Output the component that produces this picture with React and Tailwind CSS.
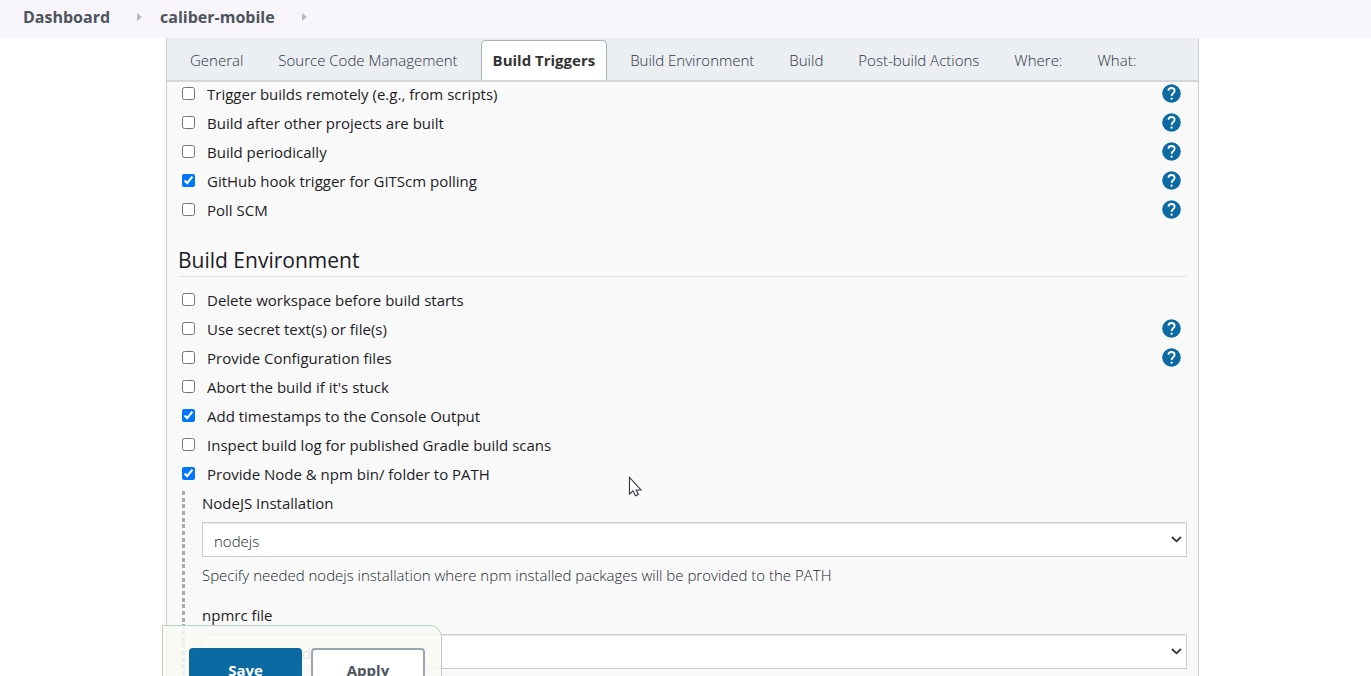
import React from "react";

const tabs = [
  { label: "General" },
  { label: "Source Code Management" },
  { label: "Build Triggers", active: true },
  { label: "Build Environment" },
  { label: "Build" },
  { label: "Post-build Actions" },
  { label: "Where:" },
  { label: "What:" },
];

const triggers = [
  { id: "remote", label: "Trigger builds remotely (e.g., from scripts)", help: true },
  { id: "after", label: "Build after other projects are built", help: true },
  { id: "periodic", label: "Build periodically", help: true },
  { id: "github", label: "GitHub hook trigger for GITScm polling", help: true, checked: true },
  { id: "poll", label: "Poll SCM", help: true },
];

const environment = [
  { id: "delete", label: "Delete workspace before build starts" },
  { id: "secret", label: "Use secret text(s) or file(s)", help: true },
  { id: "config", label: "Provide Configuration files", help: true },
  { id: "abort", label: "Abort the build if it's stuck" },
  { id: "timestamps", label: "Add timestamps to the Console Output", checked: true },
  { id: "gradle", label: "Inspect build log for published Gradle build scans" },
  { id: "node", label: "Provide Node & npm bin/ folder to PATH", checked: true },
];

function Caret() {
  return (
    <svg width="5" height="8" viewBox="0 0 5 8" aria-hidden="true">
      <path d="M0 0L5 4L0 8Z" fill="#b9b9be" />
    </svg>
  );
}

function HelpIcon() {
  return (
    <svg width="19" height="19" viewBox="2 2 20 20" aria-hidden="true">
      <circle cx="12" cy="12" r="9.8" fill="#0b6aa2" />
      <path
        d="M8.8 9.2C8.8 7.3 10.2 6.2 12 6.2S15.3 7.3 15.3 9.1C15.3 11.3 12.1 11.8 12.1 14.6"
        fill="none"
        stroke="#fff"
        strokeWidth="1.9"
      />
      <circle cx="12.1" cy="17.5" r="1.2" fill="#fff" />
    </svg>
  );
}

function OptionList({ items }) {
  return (
    <ul className="flex flex-col gap-[5px]">
      {items.map((item) => (
        <li key={item.id} className="flex h-6 items-center justify-between pr-[6px]">
          <div className="flex items-center pl-1">
            <input
              id={item.id}
              type="checkbox"
              defaultChecked={item.checked}
              className="mb-[2px] size-[13px] accent-[#0075ff]"
            />
            <label htmlFor={item.id} className="pl-3 text-[15px] leading-6 font-medium text-[#1c1c1f]">
              {item.label}
            </label>
          </div>
          {item.help && (
            <button type="button" aria-label={"Help for " + item.label} className="mb-[2px]">
              <HelpIcon />
            </button>
          )}
        </li>
      ))}
    </ul>
  );
}

function SelectField({ id, label, value }) {
  return (
    <div>
      <label htmlFor={id} className="block text-[15px] leading-6 font-medium text-[#1c1c1f]">
        {label}
      </label>
      <div className="relative mt-[7px]">
        <select
          id={id}
          className="block h-[35px] w-full appearance-none border border-[#ccc] bg-white px-[11px] pt-1 text-[15px] font-light text-[#222831] shadow-[inset_0_1px_1px_rgba(0,0,0,0.08)]"
        >
          <option>{value}</option>
        </select>
        <svg
          className="pointer-events-none absolute top-[14px] right-[5px]"
          width="11"
          height="7"
          viewBox="0 0 11 7"
          fill="none"
          aria-hidden="true"
        >
          <path d="M1 1L5.5 5.3L10 1" stroke="#333" strokeWidth="1.8" />
        </svg>
      </div>
    </div>
  );
}

export default function App() {
  return (
    <div className="flex h-screen flex-col overflow-hidden bg-white font-['Open_Sans','Noto_Sans',sans-serif] text-[#1c1c1f]">
      <nav aria-label="Breadcrumb" className="flex h-[38px] shrink-0 items-center bg-[#f8f6fa] pb-1 pl-[23px] text-base font-bold text-[#4d545d]">
        <a href="#dashboard">Dashboard</a>
        <span className="pr-[18px] pl-[27px]"><Caret /></span>
        <a href="#project">caliber-mobile</a>
        <span className="pl-[27px]"><Caret /></span>
      </nav>

      <main className="relative flex min-h-0 flex-1 flex-col pr-[172px] pl-[166px]">
        <div className="flex min-h-0 flex-1 flex-col border-x border-[#ccd0d6] bg-[#f9f9fa]">
          <div className="flex h-11 shrink-0 items-end gap-[11px] border-b-2 border-[#d3d7dc] bg-[#ebeef3] pl-[11px] text-[15px]">
            {tabs.map((tab) => (
              <a
                key={tab.label}
                href="#section"
                className={
                  tab.active
                    ? "flex h-10 items-center rounded-t-[5px] border border-b-0 border-[#aab0ba] bg-white px-[11px] font-bold whitespace-nowrap text-[#333]"
                    : "flex h-10 items-center px-3 font-light whitespace-nowrap text-[#2c333e]"
                }
              >
                {tab.label}
              </a>
            ))}
          </div>

          <div className="min-h-0 flex-1 overflow-hidden px-[11px]">
            <OptionList items={triggers} />

            <h2 className="mt-[23px] mb-[11px] border-b border-[#e3e3e6] pb-px text-[21px] leading-[30px] font-medium">
              Build Environment
            </h2>
            <OptionList items={environment} />

            <div className="mt-[5px] ml-1 flex">
              <div className="w-[3px] bg-[repeating-linear-gradient(#aaa_0px_4px,transparent_4px_7px,#aaa_7px_11px,transparent_11px_13px,#aaa_13px_17px,transparent_17px_20px)]" />
              <div className="flex-1 pb-6 pl-[17px]">
                <SelectField id="nodejs" label="NodeJS Installation" value="nodejs" />
                <p className="mt-[6px] mb-4 text-[15px] leading-6 font-light text-[#222831]">
                  Specify needed nodejs installation where npm installed packages will be provided to the PATH
                </p>
                <SelectField id="npmrc" label="npmrc file" value="- use system default -" />
              </div>
            </div>
          </div>
        </div>

        <div className="absolute -bottom-10 left-[162px] flex gap-[9px] rounded-tr-xl border border-[#b9d2c4] bg-[#f9faf3]/85 pt-[22px] pr-4 pb-[23px] pl-[26px] text-[15px] font-bold">
          <button type="button" className="h-11 w-[113px] rounded-[4px] bg-[#0b6aa2] text-white">
            Save
          </button>
          <button type="button" className="h-11 w-[114px] rounded-[4px] border-2 border-[#9ba3ad] bg-white text-[#4d545d]">
            Apply
          </button>
        </div>
      </main>

      <svg className="pointer-events-none absolute top-[476px] left-[628px]" width="14" height="21" viewBox="0 0 14 21" aria-hidden="true">
        <path
          d="M1.5 1.5V18L5 14.8L7.5 19.8L10.3 18.5L8.2 14H13Z"
          fill="#fff"
          stroke="#33333f"
          strokeWidth="1.1"
        />
      </svg>
    </div>
  );
}
